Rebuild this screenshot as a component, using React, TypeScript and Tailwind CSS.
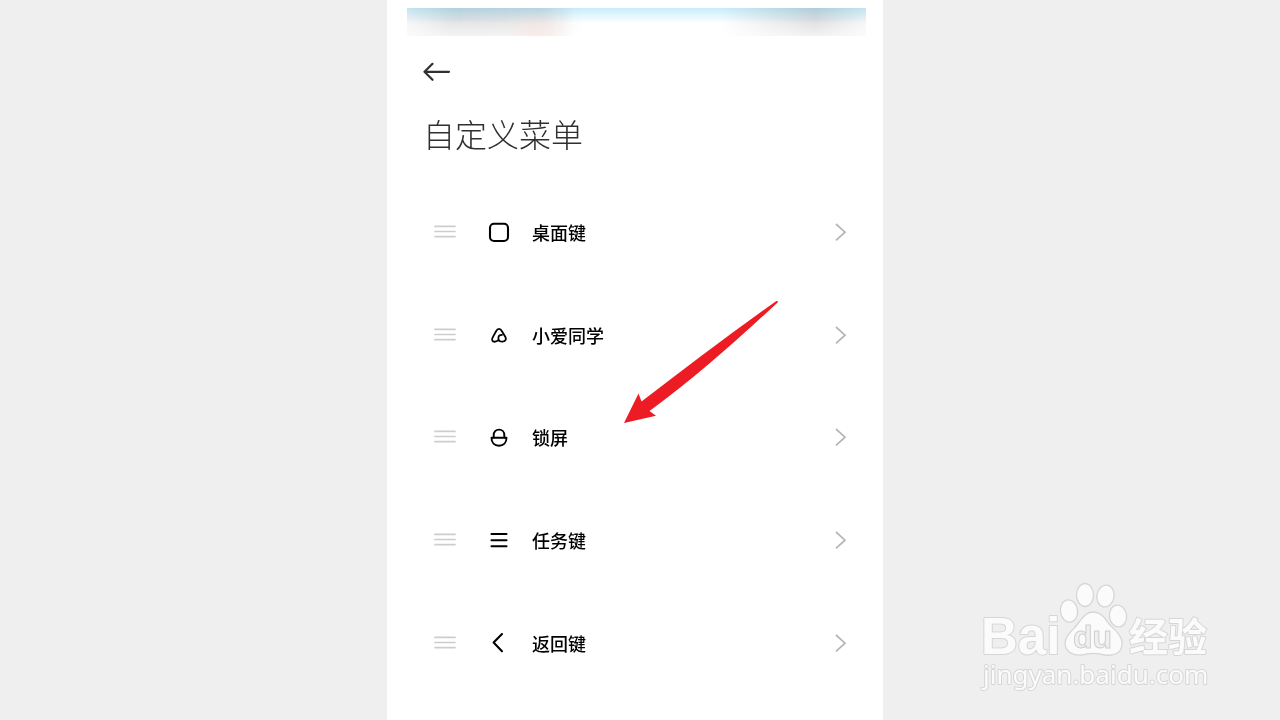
import React from 'react';

interface MenuItem {
  id: string;
  label: string;
  icon: React.ReactNode;
}

const items: MenuItem[] = [
  {
    id: 'home',
    label: '桌面键',
    icon: <rect x="2" y="3.7" width="18" height="17.3" rx="4" />,
  },
  {
    id: 'xiaoai',
    label: '小爱同学',
    icon: (
      <path
        strokeWidth="1.8"
        d="M10.2 17.2 C8.4 19 4.6 19.6 4.1 16.9 C3.9 15.6 4.6 14.6 5.1 13.6 L8.2 8 C9.6 5.2 12.4 5.2 13.8 8 L17.4 14 C18.8 16.5 17 18.7 14.4 18.7 C12 18.7 10.4 17.2 10.4 15.2 C10.4 13.2 12 11.9 13.9 11.9"
      />
    ),
  },
  {
    id: 'lock',
    label: '锁屏',
    icon: (
      <g strokeWidth="1.9">
        <path d="M5.7 12.6 V10 C5.7 6.8 7.8 4.6 11 4.6 S16.3 6.8 16.3 10 V12.6" />
        <path d="M3.5 12.7 H18.5 C18.5 17.6 15.6 20.7 11 20.7 S3.5 17.6 3.5 12.7 Z" />
      </g>
    ),
  },
  {
    id: 'tasks',
    label: '任务键',
    icon: <path d="M3.5 6 H18.5 M3.5 12.2 H18.5 M3.5 18.2 H18.5" />,
  },
  {
    id: 'back',
    label: '返回键',
    icon: <path d="M14 3 L5.6 11.6 L14 20.2" />,
  },
];

function StatusBar() {
  return (
    <div className="relative ml-5 mr-[17px] h-7 overflow-hidden bg-white">
      <div className="absolute inset-0 bg-linear-to-b from-[#c8edfb] to-white to-55%" />
      <div className="absolute inset-y-0 left-0 w-44 bg-linear-to-r from-[#f6f6f6] via-[#e3e3e3] via-25% to-transparent mix-blend-multiply" />
      <div className="absolute inset-y-0 left-10 w-32 bg-linear-to-r from-transparent via-[#f0eded] via-75% to-transparent mix-blend-multiply" />
      <div className="absolute inset-y-0 right-0 w-36 bg-linear-to-l from-[#f6f6f6] via-[#dedede] via-35% to-transparent mix-blend-multiply" />
      <div className="absolute inset-0 bg-linear-to-t from-white/60 to-transparent to-60%" />
      <div className="absolute left-28 top-4 h-5 w-10 bg-[#fbe4e0] opacity-60 blur-[9px]" />
    </div>
  );
}

function MenuRow({ item }: { item: MenuItem }) {
  return (
    <li className="flex flex-1">
      <button type="button" className="flex w-full items-center pl-[47px] pr-9 text-left">
        <svg viewBox="0 0 22 24" className="h-6 w-[22px] text-[#cdcdcd]" fill="none" stroke="currentColor" strokeWidth="1.7">
          <path d="M1 6.4 H21 M1 11.5 H21 M1 16.6 H21" strokeLinecap="round" />
        </svg>
        <svg
          viewBox="0 0 24 24"
          className="ml-8 mr-5 size-6 text-black"
          fill="none"
          stroke="currentColor"
          strokeWidth="2.1"
          strokeLinecap="round"
          strokeLinejoin="round"
        >
          {item.icon}
        </svg>
        <span className="flex-1 text-[18px] leading-6 font-medium text-black">{item.label}</span>
        <svg viewBox="0 0 12 24" className="h-6 w-3 text-[#b5b5b5]" fill="none" stroke="currentColor" strokeWidth="1.7">
          <path d="M1 4 L10 12.2 L1 20.4" />
        </svg>
      </button>
    </li>
  );
}

function Pointer() {
  return (
    <svg viewBox="0 0 156 124" className="pointer-events-none absolute left-[236px] top-[300px] h-[124px] w-[156px]">
      <path
        fill="#ed1c24"
        d="M1 123 L15.5 93.5 L18.5 101.5 C62 68 108 33 153 1.2 C154.5 0.6 155.4 1.6 154.6 2.6 C114 40 72 78 26.5 111 L33 115.8 Z"
      />
    </svg>
  );
}

function Watermark() {
  return (
    <svg
      viewBox="0 0 250 120"
      className="pointer-events-none absolute right-[55px] bottom-5 h-[120px] w-[250px]"
      fill="#fbfbfb"
      stroke="#d6d6d6"
      strokeWidth="2"
      strokeLinejoin="round"
    >
      <g className="[paint-order:stroke]">
        <text x="6" y="74" fontSize="51" fontWeight="700" fontFamily="Liberation Sans, Arial, sans-serif">Bai</text>
        <text x="154" y="71" fontSize="39" fontWeight="700" fontFamily="Noto Sans CJK SC, sans-serif">经验</text>
        <text x="8" y="104" fontSize="26" fontFamily="Noto Sans, sans-serif">jingyan.baidu.com</text>
      </g>
      <g strokeWidth="1.3">
        <ellipse cx="94" cy="31" rx="8.6" ry="11.2" transform="rotate(-8 94 31)" />
        <ellipse cx="110" cy="15" rx="8.5" ry="11.5" />
        <ellipse cx="130.5" cy="16" rx="8.6" ry="11" transform="rotate(10 130.5 16)" />
        <ellipse cx="143" cy="36" rx="8.6" ry="11" transform="rotate(-8 143 36)" />
        <path d="M118 32 C127 32 131 40 135 45 C141 51 148 57 147 65 C146 74 138 76 130 75 C122 73 114 73 107 75 C98 76 91 72 90 64 C90 56 96 52 101 46 C106 40 110 32 118 32 Z" />
      </g>
      <text x="98" y="68" fontSize="32" strokeWidth="1" fontWeight="700" fill="#f0f0f0" stroke="#cfcfcf" fontFamily="Liberation Sans, Arial, sans-serif">du</text>
    </svg>
  );
}

export default function App() {
  return (
    <div className="relative min-h-screen bg-[#efefef] pr-2.5 font-['Noto_Sans_CJK_SC',sans-serif]">
      <main className="relative mx-auto flex min-h-screen w-full max-w-[496px] flex-col bg-white pt-2 pb-[26px]">
        <StatusBar />
        <header className="px-9 pt-6">
          <button type="button" aria-label="返回" className="block">
            <svg viewBox="0 0 28 24" className="h-6 w-7 text-[#303030]" fill="none" stroke="currentColor" strokeWidth="2.2" strokeLinecap="round" strokeLinejoin="round">
              <path d="M26 11.8 H1.5 M9.5 3.8 L1.5 11.8 L9.5 19.8" />
            </svg>
          </button>
          <h1 className="mt-[25px] mb-6 text-[32px] leading-12 font-light text-[#303030]">自定义菜单</h1>
        </header>
        <ul className="flex flex-1 flex-col">
          {items.map((item) => (
            <MenuRow key={item.id} item={item} />
          ))}
        </ul>
        <Pointer />
      </main>
      <Watermark />
    </div>
  );
}
